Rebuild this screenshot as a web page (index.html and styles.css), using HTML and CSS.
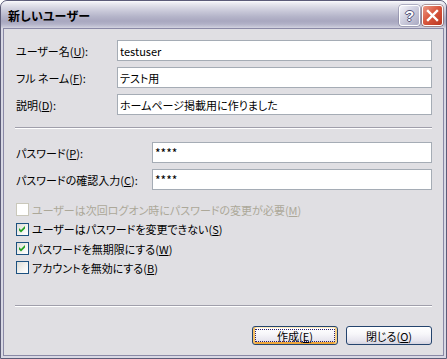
FILE: index.html
```html
<!DOCTYPE html>
<html lang="ja">
<head>
<meta charset="utf-8">
<title>新しいユーザー</title>
<link rel="stylesheet" href="styles.css">
</head>
<body>
<div class="window">
  <div class="titlebar">
    <span class="title">新しいユーザー</span>
    <div class="caption-buttons">
      <span class="cap-btn help">?</span>
      <span class="cap-btn close"><svg width="19" height="19" viewBox="0 0 19 19"><path d="M5 5 L14 14 M14 5 L5 14" stroke="#fff" stroke-width="2.4" stroke-linecap="square"/></svg></span>
    </div>
  </div>
  <div class="body">
    <div class="row">
      <label class="lbl">ユーザー名(<u>U</u>):</label>
      <input class="field" type="text" value="testuser">
    </div>
    <div class="row">
      <label class="lbl">フル ネーム(<u>F</u>):</label>
      <input class="field" type="text" value="テスト用">
    </div>
    <div class="row">
      <label class="lbl">説明(<u>D</u>):</label>
      <input class="field" type="text" value="ホームページ掲載用に作りました">
    </div>
    <div class="sep sep1"></div>
    <div class="row pw first-pw">
      <label class="lbl">パスワード(<u>P</u>):</label>
      <input class="field stars" type="text" value="****">
    </div>
    <div class="row pw">
      <label class="lbl">パスワードの確認入力(<u>C</u>):</label>
      <input class="field stars" type="text" value="****">
    </div>
    <div class="checks">
      <div class="check-row disabled"><span class="cb"></span><span>ユーザーは次回ログオン時にパスワードの変更が必要(<u>M</u>)</span></div>
      <div class="check-row tall"><span class="cb"><svg width="11" height="11" viewBox="0 0 11 11"><path d="M2 4 L4 6 L8 2 L8 4.5 L4 8.5 L2 6.5 Z" fill="#21a121"/></svg></span><span>ユーザーはパスワードを変更できない(<u>S</u>)</span></div>
      <div class="check-row"><span class="cb"><svg width="11" height="11" viewBox="0 0 11 11"><path d="M2 4 L4 6 L8 2 L8 4.5 L4 8.5 L2 6.5 Z" fill="#21a121"/></svg></span><span>パスワードを無期限にする(<u>W</u>)</span></div>
      <div class="check-row"><span class="cb"></span><span>アカウントを無効にする(<u>B</u>)</span></div>
    </div>
    <div class="sep sep2"></div>
    <div class="buttons">
      <button class="btn default"><span>作成(<u>E</u>)</span></button>
      <button class="btn"><span>閉じる(<u>O</u>)</span></button>
    </div>
  </div>
</div>
</body>
</html>
```

FILE: styles.css
```css
* { box-sizing: border-box; }
html, body { margin: 0; padding: 0; background: #fff; }
body {
  font-family: "Noto Sans CJK JP", "Liberation Sans", sans-serif;
  font-size: 11px;
  font-feature-settings: "palt";
  color: #000;
}
.window {
  width: 447px;
  height: 359px;
  background: #d8d8e4;
  border: 1px solid #5c5c78;
  border-radius: 7px 7px 0 0;
  padding: 0 2px 2px;
  display: flex;
  flex-direction: column;
  overflow: hidden;
}
.titlebar {
  height: 27px;
  margin: 0 -2px;
  flex: none;
  display: flex;
  align-items: center;
  justify-content: space-between;
  padding: 0 3px 0 7px;
  border-radius: 6px 6px 0 0;
  background: linear-gradient(to bottom, #fcfcfe 0, #ececf2 2px, #d9d9e4 6px, #c5c5d6 11px, #b3b3c8 16px, #a9a8c0 20px, #b1b1c7 23px, #c8c8d8 26px, #d6d6e2 27px);
}
.title {
  font-weight: bold;
  font-size: 12px;
  padding-top: 2px;
  letter-spacing: 0.2px;
}
.caption-buttons { display: flex; gap: 2px; padding-top: 2px; }
.cap-btn {
  width: 21px;
  height: 21px;
  border-radius: 3px;
  display: flex;
  align-items: center;
  justify-content: center;
}
.help {
  border: 1px solid #fff;
  box-shadow: 0 0 0 0.5px #7b7b98;
  background: linear-gradient(135deg, #f4f4fa 0, #d0d0e0 45%, #a9a9c2 100%);
  color: #fff;
  font-family: "Liberation Sans", sans-serif;
  font-weight: bold;
  font-size: 15px;
  text-shadow: 1px 0 #55557a, -1px 0 #55557a, 0 1px #55557a, 0 -1px #55557a;
}
.close {
  border: 1px solid #fff;
  box-shadow: 0 0 0 0.5px #7b4a48;
  background: linear-gradient(135deg, #ec9a86 0, #d9583f 45%, #bb3520 100%);
}
.body {
  flex: 1;
  background: #e0dfe3;
  border: 1px solid #8a89a6;
  padding: 11px 11px 0 11px;
  display: flex;
  flex-direction: column;
}
.row {
  display: flex;
  align-items: center;
  height: 21px;
  margin-bottom: 6px;
}
.lbl { width: 102px; flex: none; white-space: nowrap; padding-left: 1px; }
.pw .lbl { width: 137px; }
.field {
  flex: 1;
  height: 21px;
  min-width: 0;
  border: 1px solid #a5acb5;
  background: #fff;
  font: inherit;
  font-feature-settings: "palt";
  padding: 0 2px;
  margin: 0;
  outline: none;
  color: #000;
}
.stars { font-size: 12px; }
.sep {
  height: 2px;
  border-top: 1px solid #a09fab;
  border-bottom: 1px solid #fff;
  flex: none;
}
.sep1 { margin-top: 6px; margin-bottom: 13px; }
.checks { margin-top: 4px; display: flex; flex-direction: column; }
.check-row {
  height: 19px;
  display: flex;
  align-items: center;
  gap: 3px;
  padding-left: 1px;
  white-space: nowrap;
}
.check-row.tall { height: 20px; }
.cb {
  width: 13px;
  height: 13px;
  flex: none;
  border: 1px solid #1c5180;
  background: linear-gradient(135deg, #dcdcd7 0, #f4f4f2 60%, #fff 100%);
  display: flex;
  align-items: center;
  justify-content: center;
}
.disabled { color: #aca899; }
.disabled .cb { border-color: #cac8bb; background: #fff; }
.sep2 { margin-top: 28px; }
.buttons {
  margin-top: 19px;
  display: flex;
  justify-content: flex-end;
  gap: 8px;
}
.btn {
  width: 86px;
  height: 19px;
  padding: 0;
  margin: 0;
  font: inherit;
  font-feature-settings: "palt";
  color: #000;
  border: 1px solid #24446e;
  border-radius: 3px;
  background: linear-gradient(to bottom, #ffffff 0, #f7f7fa 40%, #e6e5ee 80%, #d4d3df 100%);
  display: flex;
  align-items: center;
  justify-content: center;
}
.btn.default {
  box-shadow: inset 2px 0 0 #f6c064, inset -2px 0 0 #f8d48a, inset 0 -2px 0 #efa73a, inset 0 1px 0 #fde8bc;
  outline: 1px dotted #2a1f6a;
  outline-offset: -4px;
}
```
